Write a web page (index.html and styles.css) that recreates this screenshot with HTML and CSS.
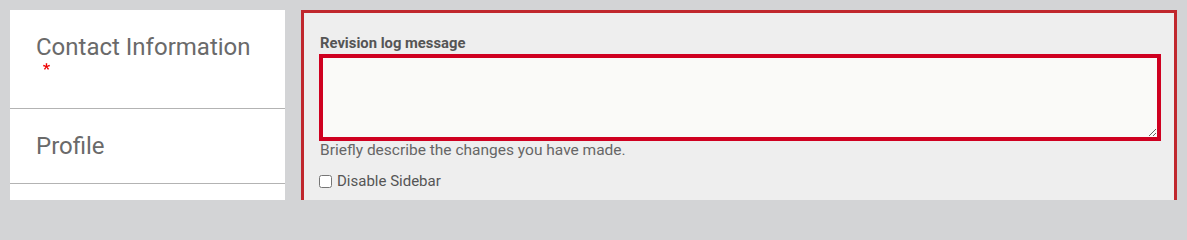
FILE: index.html
```html
<!DOCTYPE html>
<html lang="en">
<head>
<meta charset="utf-8">
<title>Revision</title>
<link rel="stylesheet" href="styles.css">
</head>
<body>
<div class="page">
  <nav class="tabs">
    <div class="tab tab-first">
      <span class="tab-title">Contact Information</span>
      <span class="req"><svg width="7" height="7" viewBox="0 0 16 16"><path d="m0 7.562 1.114-3.438c2.565.906 4.43 1.688 5.59 2.35-.306-2.921-.467-4.93-.484-6.027h3.511c-.05 1.597-.234 3.6-.558 6.003 1.664-.838 3.566-1.613 5.714-2.325l1.113 3.438c-2.05.678-4.06 1.131-6.028 1.356.984.856 2.372 2.381 4.163 4.578l-2.906 2.059c-.935-1.274-2.041-3.009-3.317-5.206-1.194 2.275-2.244 4.013-3.15 5.206l-2.856-2.059c1.872-2.307 3.21-3.832 4.015-4.578-2.081-.402-4.062-.854-5.94-1.356" fill="#e00"/></svg></span>
    </div>
    <div class="tab tab-second">
      <span class="tab-title">Profile</span>
    </div>
    <div class="tab tab-last"></div>
  </nav>
  <section class="panel">
    <label class="label" for="log">Revision log message</label>
    <textarea id="log" class="textarea"></textarea>
    <div class="help">Briefly describe the changes you have made.</div>
    <label class="check"><input type="checkbox" class="checkbox"> Disable Sidebar</label>
  </section>
</div>
</body>
</html>
```
FILE: styles.css
```css
html, body {
  margin: 0;
  padding: 0;
  height: 200px;
  background: #d3d4d6;
  font-family: Roboto, "Liberation Sans", sans-serif;
  overflow: hidden;
}
.page {
  display: flex;
  gap: 16px;
  padding: 10px 10px 0 10px;
  height: 200px;
  box-sizing: border-box;
  overflow: hidden;
}
.tabs {
  width: 275px;
  flex: none;
  background: #fff;
  display: flex;
  flex-direction: column;
}
.tab {
  padding: 0 26px;
  border-bottom: 1px solid #b3b3b3;
  color: #6a6a6a;
  font-size: 24px;
  line-height: 28px;
  box-sizing: border-box;
  flex: none;
}
.tab-first {
  padding-top: 23px;
  height: 99px;
}
.tab-second {
  padding-top: 23px;
  height: 75px;
}
.tab-title {
  display: block;
}
.req {
  display: block;
  margin-left: 7px;
  margin-top: 2px;
  height: 7px;
  line-height: 0;
}
.req svg {
  display: block;
}
.tab-last {
  border-bottom: none;
  flex: 1;
}
.panel {
  flex: 1;
  background: #eeeeee;
  border: 3px solid #c0272d;
  border-bottom: none;
  padding: 20px 13px 0 15px;
  display: flex;
  flex-direction: column;
  align-items: flex-start;
}
.label {
  font-weight: bold;
  font-size: 14.8px;
  line-height: 20px;
  color: #555;
  margin-left: 1px;
}
.textarea {
  display: block;
  width: 842px;
  height: 87px;
  margin: 1px 0 0 0;
  box-sizing: border-box;
  border: 4px solid #cf0020;
  border-radius: 0;
  background: #fafaf8;
  padding: 6px;
  font-family: inherit;
  resize: vertical;
  outline: none;
}
.help {
  font-size: 15.5px;
  line-height: 18px;
  color: #666;
  margin-left: 1px;
}
.check {
  display: flex;
  align-items: center;
  font-size: 15px;
  line-height: 20px;
  color: #555;
  margin-top: 12px;
  gap: 5px;
}
.checkbox {
  width: 13px;
  height: 13px;
  margin: 0;
}
```
